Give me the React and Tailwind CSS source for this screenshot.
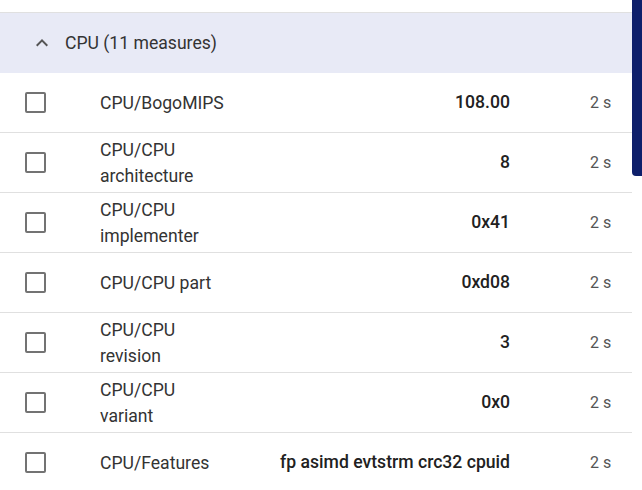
import React from "react";

const rows = [
  { name: "CPU/BogoMIPS", value: "108.00" },
  { name: "CPU/CPU architecture", value: "8" },
  { name: "CPU/CPU implementer", value: "0x41" },
  { name: "CPU/CPU part", value: "0xd08" },
  { name: "CPU/CPU revision", value: "3" },
  { name: "CPU/CPU variant", value: "0x0" },
  { name: "CPU/Features", value: "fp asimd evtstrm crc32 cpuid" },
];

export default function App() {
  return (
    <div
      className="relative w-[642px] h-[490px] overflow-hidden bg-white text-[17.6px] text-[#333333]"
      style={{ fontFamily: "Roboto, 'Liberation Sans', sans-serif" }}
    >
      <div className="w-[632px] pt-3">
        <div className="border-t border-[#e0e0e0] h-[61px] bg-[#e8eaf6] flex items-center">
          <svg
            className="ml-[30px] mr-[11px]"
            width="24"
            height="24"
            viewBox="0 0 24 24"
          >
            <path
              d="M12 8l-6 6 1.41 1.41L12 10.83l4.59 4.58L18 14z"
              fill="#555555"
            />
          </svg>
          <span>CPU (11 measures)</span>
        </div>
        {rows.map((r) => (
          <div
            key={r.name}
            className="h-[60px] border-b border-[#e0e0e0] flex items-center"
          >
            <div className="w-[100px] pl-[25px] flex items-center">
              <div className="w-[21px] h-[21px] border-2 border-[#737373] rounded-[2px]" />
            </div>
            <div className="w-[125px] leading-[26px]">{r.name}</div>
            <div className="flex-1 text-right font-medium text-[#212121]">
              {r.value}
            </div>
            <div className="w-[122px] pl-[80px] text-[16px] text-[#555555]">
              2 s
            </div>
          </div>
        ))}
      </div>
      <div className="absolute right-0 top-0 w-[10px] h-[176px] bg-[#0e1f6b] rounded-bl-[4px]" />
    </div>
  );
}
